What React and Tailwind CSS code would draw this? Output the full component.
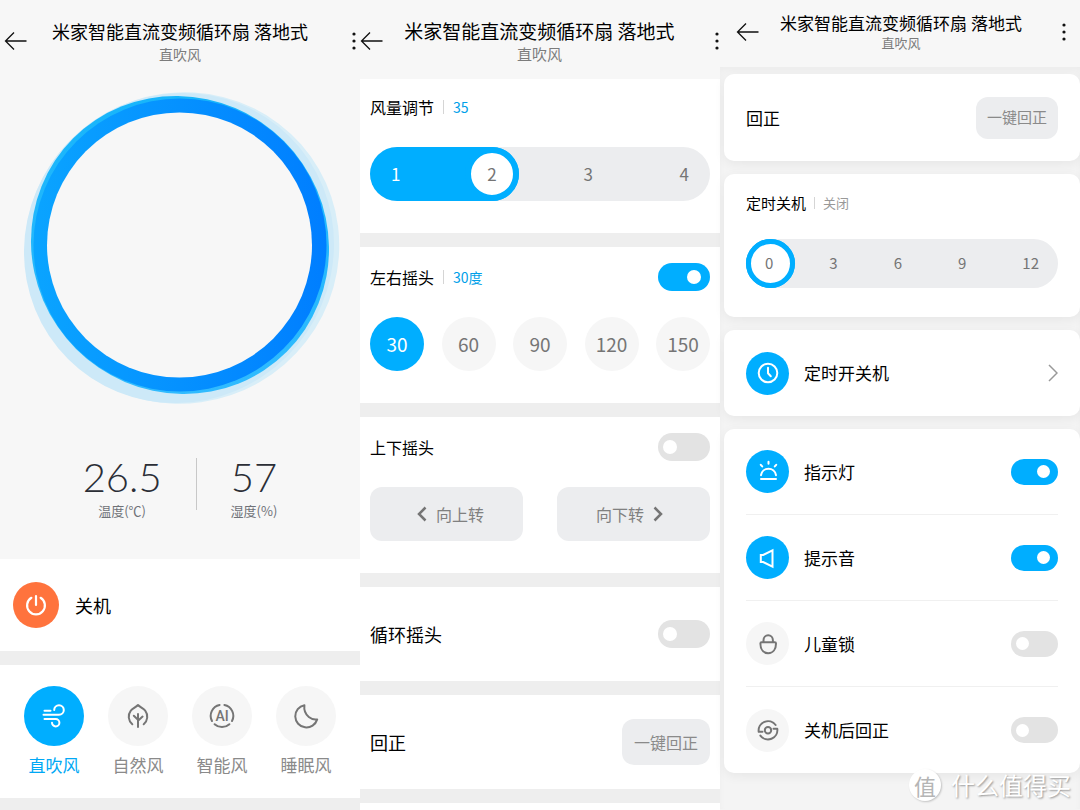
import { useState } from 'react';

const TITLE = '米家智能直流变频循环扇 落地式';

const Icon = ({ children, className = 'size-6 overflow-visible' }) => (
  <svg
    viewBox="0 0 24 24"
    fill="none"
    stroke="currentColor"
    strokeWidth="2"
    strokeLinecap="round"
    strokeLinejoin="round"
    className={className}
    aria-hidden="true"
  >
    {children}
  </svg>
);

const PowerIcon = () => (
  <Icon>
    <path d="M12 3v9M7.4 4.8a8.9 8.9 0 1 0 9.2 0" strokeWidth="2.2" />
  </Icon>
);

const WindIcon = () => (
  <Icon>
    <path d="M2.5 6.8h6M1.5 10.8H17a4.8 4.8 0 1 0-4.8-4.8M2.5 15h11.2a3.7 3.7 0 1 1-3.7 3.7" />
  </Icon>
);

const LeafIcon = () => (
  <Icon>
    <path d="M6.3 20.3A10 10 0 0 1 4.8 6.600C6.5 4.6 10 3 12 1c2 2 5.5 3.6 7.2 5.6a10 10 0 0 1-1.5 13.7" />
    <path d="M12 10v13M7.8 11.8l4.2 4M16.6 12.6 12 16.8" />
  </Icon>
);

const AiIcon = () => (
  <Icon>
    <path d="M9.6 1A11 11 0 0 0 2 17M14.4 1A11 11 0 0 1 22 17M4.6 20.2a11 11 0 0 0 14.8 0" />
    <text
      x="12"
      y="17"
      textAnchor="middle"
      fill="currentColor"
      stroke="none"
      fontSize="14"
      fontWeight="500"
      fontFamily="Roboto, sans-serif"
    >
      AI
    </text>
  </Icon>
);

const MoonIcon = () => (
  <Icon>
    <path d="M10.4 1.2A11.2 11.2 0 1 0 23.2 15.4C21 15.8 17.6 15.2 14.800 13 11.6 10.400 9.8 6 10.400 1.200Z" />
  </Icon>
);

const ClockIcon = () => (
  <Icon>
    <circle cx="12" cy="12" r="9.3" />
    <path d="M12 6.8v5.4l2.8 3" />
  </Icon>
);

const LampIcon = () => (
  <Icon>
    <path d="M5 15.2a7.6 7.6 0 0 1 15 0M5 19h15M12.5 1.8v2M4.8 4.8l1.4 1.6M20.2 4.8l-1.4 1.6" />
  </Icon>
);

const SpeakerIcon = () => (
  <Icon>
    <path d="M4.8 9h2.4l9.3-4.6v16.2L7.2 16H4.8z" strokeLinejoin="miter" />
  </Icon>
);

const LockIcon = () => (
  <Icon>
    <path d="M5.6 10.2h13.200q1.200 0 1.200 1.200c0 5.800-3 9.800-7.800 9.800s-7.800-4-7.800-9.800q0-1.200 1.200-1.200ZM7.500 10V8.200a4.700 4.900 0 0 1 9.400 0V10" />
  </Icon>
);

const RecenterIcon = () => (
  <Icon>
    <circle cx="12" cy="12.3" r="3.2" />
    <path d="M6.5 13.8H2.7A9.4 9.4 0 0 1 19.6 7M17.5 10.8h3.8A9.4 9.4 0 0 1 4.4 17.6" />
  </Icon>
);

const Header = ({ className, titleClass, subClass }) => (
  <header className={`flex items-center justify-between ${className}`}>
    <button type="button" aria-label="返回" className="flex w-6">
      <svg viewBox="0 0 24 20" className="w-6 shrink-0" fill="none" stroke="#111" strokeWidth="1.3">
        <path d="M22.5 10H1.5M10 1.5 1.5 10l8.5 8.5" />
      </svg>
    </button>
    <div className="text-center whitespace-nowrap">
      <h1 className={`text-black ${titleClass}`}>{TITLE}</h1>
      <p className={`text-[#7c7c7c] ${subClass}`}>直吹风</p>
    </div>
    <button type="button" aria-label="更多" className="flex w-6 justify-end">
      <svg viewBox="0 0 4 18" className="w-1" fill="#111">
        <circle cx="2" cy="2" r="1.6" />
        <circle cx="2" cy="9" r="1.6" />
        <circle cx="2" cy="16" r="1.6" />
      </svg>
    </button>
  </header>
);

const Toggle = ({ id, defaultChecked, small }) => (
  <input
    id={id}
    type="checkbox"
    role="switch"
    defaultChecked={defaultChecked}
    className={`flex shrink-0 cursor-pointer appearance-none items-center rounded-full bg-[#e3e3e3] pl-[5px] transition-colors before:rounded-full before:bg-white before:transition-transform checked:bg-[#00aeff] ${
      small
        ? 'h-[26px] w-[47px] before:size-[13px] checked:before:translate-x-[21px]'
        : 'h-7 w-[52px] before:size-[14px] checked:before:translate-x-6'
    }`}
  />
);

// Capsule slider: the native range thumb is drawn as the white knob
const StepSlider = ({ label, steps, initial, size, big }) => {
  const [index, setIndex] = useState(initial);
  const ratio = index / (steps.length - 1);

  return (
    <div className={`relative rounded-full bg-[#ecedef] ${big ? 'h-[54px]' : 'h-[49px]'}`}>
      <div
        className="absolute inset-y-0 left-0 rounded-full bg-[#00aeff]"
        style={{ width: `calc(${size}px + (100% - ${size}px) * ${ratio})` }}
      />
      <input
        type="range"
        aria-label={label}
        min="0"
        max={steps.length - 1}
        value={index}
        onChange={(e) => setIndex(Number(e.target.value))}
        className={`absolute inset-0 h-full w-full cursor-pointer appearance-none bg-transparent [&::-webkit-slider-thumb]:appearance-none [&::-webkit-slider-thumb]:rounded-full [&::-webkit-slider-thumb]:border-solid [&::-webkit-slider-thumb]:border-[#00aeff] [&::-webkit-slider-thumb]:bg-white ${
          big
            ? '[&::-webkit-slider-thumb]:size-[54px] [&::-webkit-slider-thumb]:border-[6px]'
            : '[&::-webkit-slider-thumb]:size-[49px] [&::-webkit-slider-thumb]:border-[5px]'
        }`}
      />
      <div
        className={`pointer-events-none relative flex h-full items-center justify-between ${
          big ? 'px-[21px] text-[17px]' : 'px-[19px] text-[15px]'
        }`}
      >
        {steps.map((step, i) => (
          <span key={step} className={i < index ? 'text-white' : 'text-[#757575]'}>
            {step}
          </span>
        ))}
      </div>
    </div>
  );
};

const modes = [
  { name: '直吹风', icon: WindIcon, active: true },
  { name: '自然风', icon: LeafIcon },
  { name: '智能风', icon: AiIcon },
  { name: '睡眠风', icon: MoonIcon },
];

const angles = [30, 60, 90, 120, 150];

const switches = [
  { id: 'lamp', name: '指示灯', icon: LampIcon, on: true },
  { id: 'sound', name: '提示音', icon: SpeakerIcon, on: true },
  { id: 'child-lock', name: '儿童锁', icon: LockIcon, on: false },
  { id: 'recenter', name: '关机后回正', icon: RecenterIcon, on: false },
];

const FanRing = () => (
  <svg viewBox="0 80 360 340" className="mx-auto mt-4 block w-[360px] max-w-full" fill="none" aria-hidden="true">
    <defs>
      <linearGradient id="ring" x1="0" y1="0" x2="1" y2="0">
        <stop offset="0" stopColor="#0aa4ff" />
        <stop offset="1" stopColor="#007eff" />
      </linearGradient>
      <linearGradient id="glow" x1="0" y1="0" x2="1" y2="1">
        <stop offset="0" stopColor="#12b4fa" />
        <stop offset="1" stopColor="#35bcff" />
      </linearGradient>
    </defs>
    <ellipse cx="182" cy="248" rx="158" ry="155" transform="rotate(-30 182 248)" fill="#d8eef8" />
    <ellipse cx="179" cy="248" rx="157" ry="153" transform="rotate(-45 179 248)" fill="#cde9f8" />
    <ellipse cx="180" cy="245" rx="151" ry="147" transform="rotate(45 180 245)" fill="url(#glow)" />
    <circle cx="180" cy="245" r="146.5" fill="url(#ring)" />
    <circle cx="179.5" cy="245" r="132.5" fill="#f7f7f7" />
  </svg>
);

const Reading = ({ value, label }) => (
  <div>
    <p className="font-['Lato','Noto_Sans_CJK_SC',sans-serif] text-[40px] leading-[38px] font-light text-[#2b2e36]">{value}</p>
    <p className="mt-[5px] text-[13px] leading-5 text-[#6f7278]">{label}</p>
  </div>
);

const HomePanel = () => (
  <section className="flex min-w-0 flex-col bg-[#eee]">
    <div className="bg-[#f7f7f7] pt-[18px] pb-[38px]">
      <Header
        className="px-1"
        titleClass="text-[18px] leading-[26px]"
        subClass="text-[14px] leading-5"
      />
      <FanRing />
      <div className="mt-[38px] flex justify-center gap-[34px] text-center">
        <Reading value="26.5" label="温度(℃)" />
        <div className="h-[52px] w-px bg-[#c8c8c8]" />
        <Reading value="57" label="湿度(%)" />
      </div>
    </div>
    <div className="bg-white px-[13px] py-[23px]">
      <button type="button" className="flex items-center gap-4 text-[18px] leading-6 text-black">
        <span className="flex size-[46px] items-center justify-center rounded-full bg-[#ff733d] text-white">
          <PowerIcon />
        </span>
        关机
      </button>
    </div>
    <div className="mt-[14px] flex justify-between bg-white px-6 pt-[21px] pb-[21px]">
      {modes.map(({ name, icon: ModeIcon, active }) => (
        <button
          key={name}
          type="button"
          className={`flex flex-col items-center gap-[7px] text-[17px] leading-6 ${
            active ? 'text-[#00a8f5]' : 'text-[#8a8a8a]'
          }`}
        >
          <span
            className={`flex size-[60px] items-center justify-center rounded-full ${
              active ? 'bg-[#00aeff] text-white' : 'bg-[#f6f6f6] text-[#757575]'
            }`}
          >
            <ModeIcon />
          </span>
          {name}
        </button>
      ))}
    </div>
  </section>
);

const SwingPanel = () => {
  const [angle, setAngle] = useState(30);

  return (
    <section className="flex min-w-0 flex-col gap-[14px] bg-[#eee]">
      <div className="bg-white">
        <Header
          className="bg-[#f7f7f7] pt-[18px] pr-px pb-[15px]"
          titleClass="text-[19px] leading-[26px]"
          subClass="text-[15px] leading-5"
        />
        <div className="px-[10px] pt-4 pb-8">
          <div className="flex items-center gap-[9px]">
            <h2 className="text-[16px] leading-6">风量调节</h2>
            <span className="h-[14px] w-px bg-[#d5d5d5]" />
            <span className="text-[14px] leading-6 text-[#00a0e9]">35</span>
          </div>
          <div className="mt-7">
            <StepSlider label="风量调节" steps={[1, 2, 3, 4]} initial={1} size={54} big />
          </div>
        </div>
      </div>

      <div className="bg-white px-[10px] pt-4 pb-8">
        <div className="flex items-center justify-between">
          <div className="flex items-center gap-[9px]">
            <label htmlFor="swing-x" className="text-[16px] leading-7">左右摇头</label>
            <span className="h-[14px] w-px bg-[#d5d5d5]" />
            <span className="text-[14px] leading-7 text-[#00a0e9]">{angle}度</span>
          </div>
          <Toggle id="swing-x" defaultChecked />
        </div>
        <div className="mt-[26px] flex justify-between">
          {angles.map((a) => (
            <button
              key={a}
              type="button"
              onClick={() => setAngle(a)}
              className={`size-[54px] rounded-full text-[19px] ${
                a === angle ? 'bg-[#00aeff] text-white' : 'bg-[#f6f6f6] text-[#757575]'
              }`}
            >
              {a}
            </button>
          ))}
        </div>
      </div>

      <div className="bg-white px-[10px] pt-4 pb-8">
        <div className="flex items-center justify-between">
          <label htmlFor="swing-y" className="text-[16px] leading-7">上下摇头</label>
          <Toggle id="swing-y" />
        </div>
        <div className="mt-[26px] grid grid-cols-2 gap-[34px] text-[16px] text-[#808080]">
          <button type="button" className="flex h-[54px] items-center justify-center gap-[9px] rounded-xl bg-[#ecedef] pl-2">
            <svg viewBox="0 0 10 16" className="w-[10px]" fill="none" stroke="#757575" strokeWidth="2.5">
              <path d="M8.5 1.5 2 8l6.5 6.5" />
            </svg>
            向上转
          </button>
          <button type="button" className="flex h-[54px] items-center justify-center gap-[9px] rounded-xl bg-[#ecedef] pr-2">
            向下转
            <svg viewBox="0 0 10 16" className="w-[10px]" fill="none" stroke="#757575" strokeWidth="2.5">
              <path d="M1.5 1.5 8 8l-6.5 6.5" />
            </svg>
          </button>
        </div>
      </div>

      <div className="flex h-[94px] items-center justify-between bg-white px-[10px]">
        <label htmlFor="swing-loop" className="text-[18px]">循环摇头</label>
        <Toggle id="swing-loop" />
      </div>

      <div className="flex h-[94px] items-center justify-between bg-white px-[10px]">
        <h2 className="text-[18px]">回正</h2>
        <button type="button" className="h-[46px] rounded-xl bg-[#ecedef] px-3 text-[16px] text-[#8a8a8a]">
          一键回正
        </button>
      </div>
      <div className="grow bg-white" />
    </section>
  );
};

const Card = ({ children, className = '' }) => (
  <div className={`rounded-[10px] bg-white px-[22px] shadow-[0_3px_12px_rgba(0,0,0,0.06)] ${className}`}>
    {children}
  </div>
);

const SettingsPanel = () => (
  <section className="relative min-w-0 bg-[#f4f4f4]">
    <Header
      className="bg-[#f7f7f7] pt-3 pr-[14px] pb-[15px] pl-4"
      titleClass="text-[17px] leading-[22px]"
      subClass="text-[13px] leading-[18px]"
    />
    <div className="flex flex-col gap-[13px] pt-[7px] pb-9 pl-1 shadow-[inset_0_4px_6px_rgba(0,0,0,0.03)]">
      <Card className="flex h-[87px] items-center justify-between">
        <h2 className="text-[17px]">回正</h2>
        <button type="button" className="h-[42px] rounded-xl bg-[#ecedef] px-[11px] text-[15px] text-[#8a8a8a]">
          一键回正
        </button>
      </Card>

      <Card className="pt-[17px] pb-[29px]">
        <div className="flex items-center gap-2">
          <h2 className="text-[15px] leading-6">定时关机</h2>
          <span className="h-3 w-px bg-[#d5d5d5]" />
          <span className="text-[13px] leading-6 text-[#999]">关闭</span>
        </div>
        <div className="mt-6">
          <StepSlider label="定时关机" steps={[0, 3, 6, 9, 12]} initial={0} size={49} />
        </div>
      </Card>

      <Card>
        <a href="#timer" className="flex h-[86px] items-center gap-[15px] text-[17px]">
          <span className="flex size-[43px] items-center justify-center rounded-full bg-[#00aeff] text-white">
            <ClockIcon />
          </span>
          <span className="grow">定时开关机</span>
          <svg viewBox="0 0 10 18" className="w-[10px]" fill="none" stroke="#999" strokeWidth="1.5">
            <path d="M1 1l8 8-8 8" />
          </svg>
        </a>
      </Card>

      <Card className="divide-y divide-[#f0f0f0]">
        {switches.map(({ id, name, icon: RowIcon, on }) => (
          <div key={id} className="flex h-[86px] items-center gap-[15px] text-[17px]">
            <span
              className={`flex size-[43px] items-center justify-center rounded-full ${
                on ? 'bg-[#00aeff] text-white' : 'bg-[#f6f6f6] text-[#757575]'
              }`}
            >
              <RowIcon />
            </span>
            <label htmlFor={id} className="grow">{name}</label>
            <Toggle id={id} defaultChecked={on} small />
          </div>
        ))}
      </Card>
    </div>

    <div className="absolute right-[9px] bottom-[9px] flex items-center gap-[10px] text-white">
      <span className="flex size-8 items-center justify-center rounded-full bg-white text-[22px] leading-8 text-[#b5b5b5] shadow-[1px_1px_2px_rgba(0,0,0,0.2)]">
        值
      </span>
      <span className="text-[24px] leading-8 [text-shadow:1px_1px_2px_rgba(0,0,0,0.4)]">什么值得买</span>
    </div>
  </section>
);

export default function App() {
  return (
    <main
      lang="zh-CN"
      className="grid min-h-screen grid-cols-3 overflow-hidden bg-[#eee] font-['Noto_Sans_CJK_SC',sans-serif] text-black"
    >
      <HomePanel />
      <SwingPanel />
      <SettingsPanel />
    </main>
  );
}
